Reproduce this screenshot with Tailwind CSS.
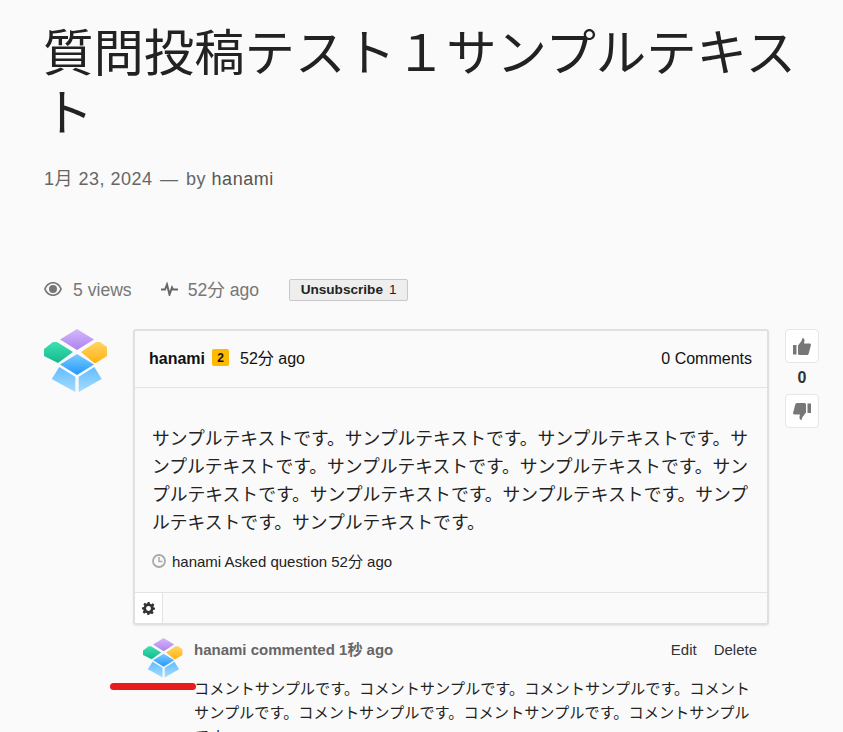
<!DOCTYPE html>
<html lang="ja">
<head>
  <meta charset="UTF-8" />
  <meta name="viewport" content="width=device-width, initial-scale=1" />
  <title>質問投稿テスト１サンプルテキスト</title>
  <script src="https://cdn.jsdelivr.net/npm/@tailwindcss/browser@4"></script>
</head>
<body class="relative h-[732px] overflow-hidden bg-[#fafafa] text-[#111] font-['Liberation_Sans','Noto_Sans_CJK_JP',sans-serif]">
  <main class="pl-[44px] pr-[24px]">
    <h1 class="pt-[20px] text-[50.4px] leading-[60px] font-normal -ml-[1px] text-[#222] font-['Noto_Sans_CJK_JP','Liberation_Sans',sans-serif]">質問投稿テスト１サンプルテキスト</h1>

    <p class="mt-[26px] text-[18px] leading-[26px] tracking-[0.5px] text-[#666]">1月 23, 2024 <span class="mx-[2px]">—</span> by <span class="text-[#555]">hanami</span></p>

    <div class="mt-[85px] flex items-center h-[26px] text-[17.6px] text-[#777]">
      <svg class="w-[18px] h-[14px] mr-[11px] -mt-[3px]" viewBox="0 0 18 14"><path fill="#777" fill-rule="evenodd" d="M9 0c4 0 7.300 2.500 9 7-1.700 4.500-5 7-9 7S1.700 11.500 0 7c1.700-4.500 5-7 9-7zM1.800 7C3.300 10.400 5.900 12.400 9 12.400s5.700-2 7.200-5.400C14.700 3.600 12.100 1.600 9 1.600S3.300 3.600 1.800 7zM9 3a4 4 0 1 1 0 8 4 4 0 0 1 0-8z"/></svg>
      <span>5 views</span>
      <svg class="w-[17px] h-[14px] ml-[29px] mr-[10px] -mt-[2px]" viewBox="0 0 17 14"><path fill="none" stroke="#666" stroke-width="2" d="M0 7.500h4l2-5 2.500 10 2.500-7 1 2h5"/></svg>
      <span>52分 ago</span>
      <button class="ml-[30px] h-[22px] w-[119px] flex items-center justify-center gap-[6px] border border-[#c8c8c8] rounded-[2px] bg-[#eee] text-[13.6px] text-[#222]" type="button"><b>Unsubscribe</b><span>1</span></button>
    </div>

    <div class="mt-[26px] flex items-start">
      <svg class="w-[64px] h-[64px] shrink-0" viewBox="0 0 64 64">
        <defs>
          <linearGradient id="pu" x1="0" y1="0" x2="0" y2="1"><stop offset="0" stop-color="#d6b8fb"/><stop offset="1" stop-color="#ad83ee"/></linearGradient>
          <linearGradient id="gr" x1="0" y1="0" x2="0" y2="1"><stop offset="0" stop-color="#3fe0b4"/><stop offset="1" stop-color="#12b98c"/></linearGradient>
          <linearGradient id="ye" x1="0" y1="0" x2="0" y2="1"><stop offset="0" stop-color="#ffd466"/><stop offset="1" stop-color="#ffb311"/></linearGradient>
          <linearGradient id="bl" x1="0" y1="0" x2="0" y2="1"><stop offset="0" stop-color="#7ccbff"/><stop offset="1" stop-color="#2298fb"/></linearGradient>
          <linearGradient id="lb" x1="0" y1="0" x2="0" y2="1"><stop offset="0" stop-color="#63bcff"/><stop offset="1" stop-color="#a5dcff"/></linearGradient>
        </defs>
        <path fill="url(#pu)" d="M33 0l17 10.500L33 21 16 10.500z"/>
        <path fill="url(#gr)" d="M0 20l9-7h4l16 10-15 11L0 27z"/>
        <path fill="url(#ye)" d="M37 23l15-10h4l7 5v9l-11 7h-2z"/>
        <path fill="url(#bl)" d="M33 25l17 10.500L33 46 16 35.500z"/>
        <path fill="url(#lb)" d="M15.300 38l16 9.700V63L7.700 50z"/>
        <path fill="url(#lb)" d="M50.300 38l-15.600 9.700V63l23-13z"/>
      </svg>

      <div class="ml-[25px] w-[636px] shrink-0">
        <article class="border-2 border-[#e0e0e0] rounded-[3px] shadow-[0_1px_2px_rgba(0,0,0,0.08)]">
          <header class="h-[57px] flex items-center justify-between pl-[14px] pr-[15px] border-b border-[#e3e3e3] text-[16px]">
            <div class="flex items-center">
              <b class="text-[16px]">hanami</b>
              <span class="ml-[7px] w-[17px] h-[17px] -mt-[3px] rounded-[2px] bg-[#ffba00] text-[12px] font-bold flex items-center justify-center">2</span>
              <span class="ml-[11px]">52分 ago</span>
            </div>
            <span>0 Comments</span>
          </header>
          <div class="pt-[37px] pl-[17px] pr-[8px] h-[204px]">
            <p class="text-[17.8px] leading-[28px] text-[#222]">サンプルテキストです。サンプルテキストです。サンプルテキストです。サンプルテキストです。サンプルテキストです。サンプルテキストです。サンプルテキストです。サンプルテキストです。サンプルテキストです。サンプルテキストです。サンプルテキストです。</p>
            <p class="mt-[15px] flex items-center text-[15px] leading-[20px] text-[#222]">
              <svg class="w-[14px] h-[14px] mr-[6px] -mt-[2px]" viewBox="0 0 14 14"><circle cx="7" cy="7" r="6" fill="none" stroke="#aaa" stroke-width="1.800"/><path fill="none" stroke="#aaa" stroke-width="1.500" d="M7 3v4.500h3.500"/></svg>
              hanami Asked question 52分 ago
            </p>
          </div>
          <footer class="h-[31px] flex border-t border-[#e3e3e3]">
            <div class="w-[28px] bg-white border-r border-[#e3e3e3] flex items-center justify-center">
              <svg class="w-[13px] h-[13px]" viewBox="0 0 24 24"><path fill="#333" fill-rule="evenodd" d="M10 0h4l.7 3.300 2.500 1 2.800-1.800 2.800 2.800-1.800 2.800 1 2.500L24 10v4l-3.300.7-1 2.500 1.800 2.800-2.800 2.800-2.800-1.800-2.500 1L14 24h-4l-.7-3.300-2.500-1-2.800 1.800-2.800-2.800 1.800-2.800-1-2.500L0 14v-4l3.300-.7 1-2.500-1.800-2.800 2.800-2.800 2.800 1.800 2.500-1zM12 7.500a4.500 4.500 0 1 0 0 9 4.500 4.500 0 0 0 0-9z"/></svg>
            </div>
          </footer>
        </article>

        <section class="mt-[13px] flex">
          <svg class="w-[40px] h-[40px] ml-[10px] shrink-0" viewBox="0 0 64 64">
            <path fill="url(#pu)" d="M33 0l17 10.500L33 21 16 10.500z"/>
            <path fill="url(#gr)" d="M0 20l9-7h4l16 10-15 11L0 27z"/>
            <path fill="url(#ye)" d="M37 23l15-10h4l7 5v9l-11 7h-2z"/>
            <path fill="url(#bl)" d="M33 25l17 10.500L33 46 16 35.500z"/>
            <path fill="url(#lb)" d="M15.300 38l16 9.700V63L7.700 50z"/>
            <path fill="url(#lb)" d="M50.300 38l-15.600 9.700V63l23-13z"/>
          </svg>
          <div class="ml-[11px] w-[563px]">
            <div class="flex justify-between items-center h-[24px] text-[15px]">
              <b class="text-[#666]">hanami commented 1秒 ago</b>
              <div class="flex gap-[17px] text-[#333]"><span>Edit</span><span>Delete</span></div>
            </div>
            <p class="mt-[15px] w-[565px] text-[15.2px] leading-[24px] text-[#222]">コメントサンプルです。コメントサンプルです。コメントサンプルです。コメントサンプルです。コメントサンプルです。コメントサンプルです。コメントサンプルです。</p>
          </div>
        </section>
      </div>

      <aside class="ml-[16px] w-[34px] shrink-0 flex flex-col items-center">
        <button class="w-[34px] h-[34px] bg-white border border-[#e6e6e6] rounded-[4px] flex items-center justify-center" type="button">
          <svg class="w-[18px] h-[17px]" viewBox="0 0 18 17"><path fill="#777" d="M0 7h3.500v9.500H0zM5 7.500l3.500-4.500L9.500 0c2 0 2.500 2 1.500 5.500h5.500c1.500 0 1.800 1.500 1.200 2.500l-2 7.500c-.3 1-1 1.500-2 1.500H7c-1 0-2-.5-2-1.500z"/></svg>
        </button>
        <b class="mt-[3px] h-[24px] text-[16px] leading-[24px] text-[#333]">0</b>
        <button class="mt-[4px] w-[34px] h-[34px] bg-white border border-[#e6e6e6] rounded-[4px] flex items-center justify-center" type="button">
          <svg class="w-[18px] h-[17px]" viewBox="0 0 18 17"><path fill="#777" d="M18 10h-3.500V.5H18zM13 9.500L9.500 14l-1 3c-2 0-2.500-2-1.500-5.500H1.500C0 11.500-.3 10 .3 9l2-7.500C2.600.5 3.300 0 4.300 0H11c1 0 2 .5 2 1.500z"/></svg>
        </button>
      </aside>
    </div>
  </main>

  <div class="absolute left-[110px] top-[683px] w-[86px] h-[7px] rounded-full bg-[#e81c1c]"></div>
</body>
</html>
